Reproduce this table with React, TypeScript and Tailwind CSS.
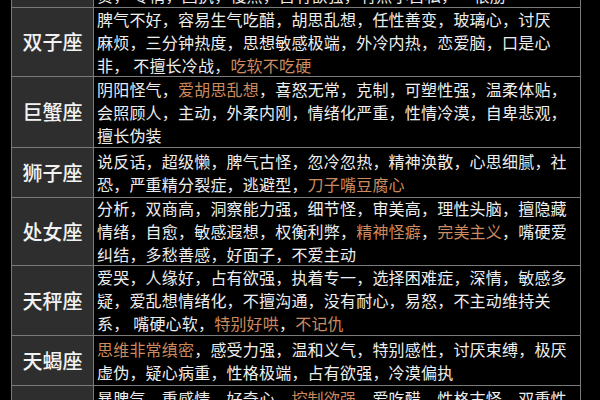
import React from "react";

type Seg = string | { h: string };
type Row = { name: string; h: string; lines: Seg[][] };

const rows: Row[] = [
  {
    name: "双子座",
    h: "h-[69px]",
    lines: [
      ["脾气不好，容易生气吃醋，胡思乱想，任性善变，玻璃心，讨厌"],
      ["麻烦，三分钟热度，思想敏感极端，外冷内热，恋爱脑，口是心"],
      ["非， 不擅长冷战，", { h: "吃软不吃硬" }],
    ],
  },
  {
    name: "巨蟹座",
    h: "h-[71px]",
    lines: [
      ["阴阳怪气，", { h: "爱胡思乱想" }, "，喜怒无常，克制，可塑性强，温柔体贴，"],
      ["会照顾人，主动，外柔内刚，情绪化严重，性情冷漠，自卑悲观，"],
      ["擅长伪装"],
    ],
  },
  {
    name: "狮子座",
    h: "h-[50px]",
    lines: [
      ["说反话，超级懒，脾气古怪，忽冷忽热，精神涣散，心思细腻，社"],
      ["恐，严重精分裂症，逃避型，", { h: "刀子嘴豆腐心" }],
    ],
  },
  {
    name: "处女座",
    h: "h-[68px]",
    lines: [
      ["分析，双商高，洞察能力强，细节怪，审美高，理性头脑，擅隐藏"],
      ["情绪，自愈，敏感遐想，权衡利弊，", { h: "精神怪癖" }, "，", { h: "完美主义" }, "，嘴硬爱"],
      ["纠结，多愁善感，好面子，不爱主动"],
    ],
  },
  {
    name: "天秤座",
    h: "h-[70px]",
    lines: [
      ["爱哭，人缘好，占有欲强，执着专一，选择困难症，深情，敏感多"],
      ["疑，爱乱想情绪化，不擅沟通，没有耐心，易怒，不主动维持关"],
      ["系， 嘴硬心软，", { h: "特别好哄" }, "，", { h: "不记仇" }],
    ],
  },
  {
    name: "天蝎座",
    h: "h-[50px]",
    lines: [
      [{ h: "思维非常缜密" }, "，感受力强，温和义气，特别感性，讨厌束缚，极厌"],
      ["虚伪，疑心病重，性格极端，占有欲强，冷漠偏执"],
    ],
  },
];

const font = { fontFamily: '"Noto Sans CJK SC", "Noto Sans", sans-serif' };

function Line({ segs }: { segs: Seg[] }) {
  return (
    <div className="whitespace-pre leading-[23px]">
      {segs.map((s, i) =>
        typeof s === "string" ? (
          <span key={i}>{s}</span>
        ) : (
          <span key={i} className="text-[#cc8a5e]">
            {s.h}
          </span>
        )
      )}
    </div>
  );
}

export default function App() {
  return (
    <div className="w-[600px] h-[400px] bg-black overflow-hidden" style={font}>
      <div className="ml-[11px] -mt-[16px] w-[570px] border-x border-[#7a7a7a]">
        {/* partial top row */}
        <div className="flex h-[23px]">
          <div className="w-[82px] shrink-0 bg-[#2e2e2e] border-r border-[#7a7a7a]" />
          <div className="flex-1 pl-[3px] text-[16px] tracking-[0.2px] text-[#eeeeee]">
            <Line segs={["贪， 专情，固执，慢热，占有欲强，有点小自私，一根筋"]} />
          </div>
        </div>
        {rows.map((r) => (
          <div key={r.name} className={`flex ${r.h} border-t border-[#7a7a7a]`}>
            <div className="w-[82px] shrink-0 bg-[#2e2e2e] border-r border-[#7a7a7a] flex items-center justify-center text-[20px] font-medium text-[#f2f2f2]">
              {r.name}
            </div>
            <div className="flex-1 flex flex-col justify-center pl-[3px] text-[16px] tracking-[0.2px] text-[#eeeeee]">
              {r.lines.map((l, i) => (
                <Line key={i} segs={l} />
              ))}
            </div>
          </div>
        ))}
        <div className="flex h-[30px] border-t border-[#7a7a7a]">
          <div className="w-[82px] shrink-0 bg-[#2e2e2e] border-r border-[#7a7a7a]" />
          <div className="flex-1 pl-[3px] pt-[1px] text-[16px] tracking-[0.2px] text-[#eeeeee]">
            <Line segs={["暴脾气，重感情，好奇心，", { h: "控制欲强" }, "，爱吃醋，性格古怪，双重性"]} />
          </div>
        </div>
      </div>
    </div>
  );
}
